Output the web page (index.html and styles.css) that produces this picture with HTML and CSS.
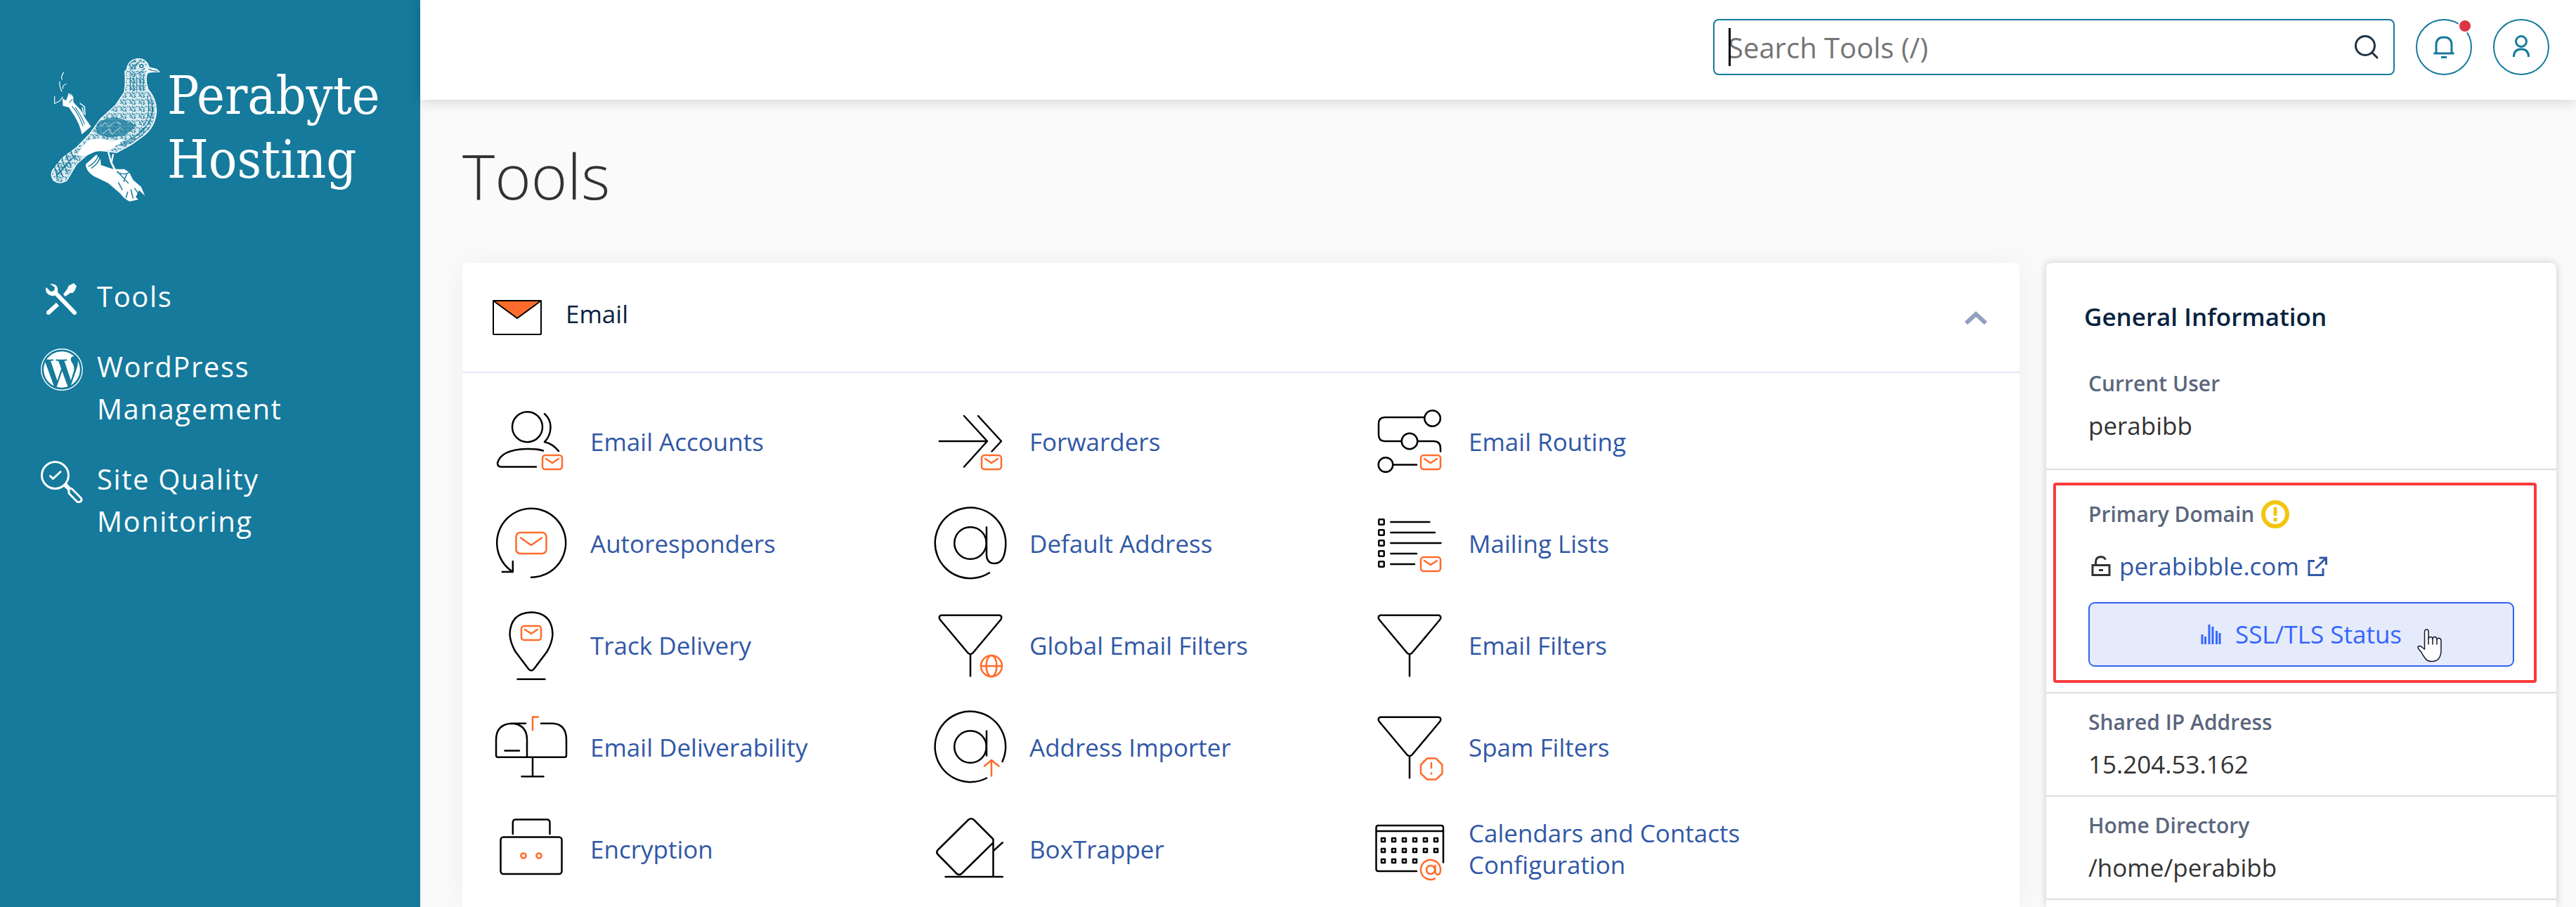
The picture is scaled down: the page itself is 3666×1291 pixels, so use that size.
FILE: index.html
```html
<!DOCTYPE html>
<html lang="en">
<head>
<meta charset="utf-8">
<title>Tools</title>
<meta name="viewport" content="width=device-width, initial-scale=1">
<link rel="stylesheet" href="styles.css">
</head>
<body>
<svg class="sprite" aria-hidden="true">
  <defs>
    <g id="mail"><rect x="76" y="80" width="28" height="20" rx="4"/><path d="M81 85l9 6 9-6"/></g>
    <g id="funnel"><path d="M19 17.7H101q3 .2 3.3 3 .1 2-1.3 3.6L63.2 71.8q-3.2 2.4-6.4 0L17 24.3q-1.400-1.600-1.300-3.600.3-2.800 3.300-3zM60 73.500V104.300"/></g>
    <pattern id="plumage" width="34" height="30" patternUnits="userSpaceOnUse">
      <path d="M2 4l7 5-2 7M14 2l4 8 8-3M28 12l-6 6 3 6M4 22l9-3 4 7M20 27l9-5M30 2l3 6M10 13l5 4" fill="none" stroke="#157a9c" stroke-width="3"/>
    </pattern>
  </defs>
</svg>
<div class="layout">
  <aside class="sidebar">
    <a class="logo" href="#">
      <svg class="logo-bird" viewBox="0 0 158 204" aria-hidden="true">
        <g transform="scale(.3838 .3333) translate(-183 -129)" stroke-linecap="round" stroke-linejoin="round">
          <path d="M237 188q-12 20-6 32M222 228q-2 22 8 42M246 238q-16 8-12 20M203 292v30l18-10 12-18M254 280q16 2 18 24" fill="none" stroke="#fff" stroke-width="3"/>
          <path d="M232 300l14 10 8-28 14 8 6 28 26 32 16 34 22 36-34 34q-6-40-28-80l-20-36-22-6z" fill="#fff"/>
          <path d="M298 322l16 14 2 34M306 340l4 26" fill="none" stroke="#fff" stroke-width="4"/>
          <path d="M268 334q24 30 40 84M280 340q20 30 34 70M258 318l10-14" fill="none" stroke="#157a9c" stroke-width="3"/>
          <path d="M318 582l40-42q20 20 16 44l46 18 42 0 18 14 14 32 30 30 14 38-22-24-12 30 10 10-32 8q-20-8-36-34l-44-44-54-30q-28-20-30-50z" fill="#fff"/>
          <path d="M330 590q30-20 36-48M340 598q26-20 30-44M436 612l40 50M470 625l-10 30M486 690l8 36M474 700l-6 24M500 684l12 20M454 690l-14-30M436 616q30 14 44 0" fill="none" stroke="#157a9c" stroke-width="4"/>
          <path d="M540 170l12-4 30 8 13 14-26 1-30 4z" fill="#fff"/>
          <path d="M471 178q4-42 40-47 32-2 41 34l-5 28q-6 10-4 40l6 28q32 42 31 96-4 62-44 100l-48 40-54 34-42-6-48-4-60 60-36 70q-26 18-48 0-18-30 4-56l28-40 52-44 50-60 40-64 56-58 32-56q6-40 2-88z" fill="#fff" fill-opacity=".85"/>
          <path d="M471 178q4-42 40-47 32-2 41 34l-5 28q-6 10-4 40l6 28q32 42 31 96-4 62-44 100l-48 40-54 34-42-6-48-4-60 60-36 70q-26 18-48 0-18-30 4-56l28-40 52-44 50-60 40-64 56-58 32-56q6-40 2-88z" fill="url(#plumage)" stroke="#fff" stroke-width="4"/>
          <path d="M368 400q50-30 90-10l50 26-44 42-60 10-42-16q-14-30 6-52z" fill="#157a9c" fill-opacity=".75"/>
          <path d="M372 420l20-16 12 18 20-20M382 450l24-20 10 24 30-30 10 12M430 400l20 10" fill="none" stroke="#fff" stroke-width="2"/>
          <path d="M484 206v60M496 204v66M508 208v60M520 206v62M532 204v60M478 160q10-20 26-22M484 180q14-26 34-34M560 300q14 60-10 110M546 290q16 60-8 120M568 340q-4 70-60 120M556 420q-40 60-96 80M540 420q-30 46-80 66M500 470q-30 24-60 30M492 196q16 6 40-16M500 172l10-24" fill="none" stroke="#157a9c" stroke-width="3"/>
          <path d="M200 580q10 40 14 56M214 564q4 40 20 70M230 552q4 30 20 60M246 536q4 26 18 50M262 520q4 20 16 40M210 630l40-50M230 600l50-56" fill="none" stroke="#157a9c" stroke-width="4"/>
          <path d="M322 484q50-24 90 0l52-12-50 46-60 10-40 20-30-6z" fill="#fff"/>
          <circle cx="525" cy="162" r="11" fill="#157a9c" stroke="#fff" stroke-width="4"/>
          <circle cx="525" cy="162" r="4" fill="#fff"/>
          <path d="M552 176q16 8 32 8" fill="none" stroke="#157a9c" stroke-width="4"/>
          <path d="M402 528l10 44 12 30 22 52M420 540l-6 34 12 28" fill="none" stroke="#fff" stroke-width="6"/>
        </g>
      </svg>
      <span class="logo-text">Perabyte<br>Hosting</span>
    </a>
    <nav class="nav">
      <a class="nav-item" href="#">
        <svg class="nav-icon" viewBox="0 0 60 60" aria-hidden="true">
          <path d="M22 22L48 49" stroke="#fff" stroke-width="6" stroke-linecap="round"/>
          <path d="M24 37L11 49" stroke="#fff" stroke-width="6" stroke-linecap="butt"/>
          <circle cx="11" cy="49" r="3" fill="#fff"/>
          <path d="M35 26l-3-3 6-8q1-5 5-6l4-2 4 4-1 3q-3 7-5 7h-3z" fill="#fff"/>
          <path d="M13 8q9-1 11 6 1 4-1 8l-4 3q-7 1-11-5-2-5 0-7l6 6 5-1 1-5z" fill="#fff"/>
        </svg>
        <span>Tools</span>
      </a>
      <a class="nav-item" href="#">
        <svg class="nav-icon" viewBox="0 0 24 24" aria-hidden="true">
          <circle cx="12" cy="12" r="11.700" fill="none" stroke="#fff" stroke-width=".55"/>
          <path transform="translate(.5 .5) scale(.958)" fill="#fff" d="M21.469 6.825c.84 1.537 1.318 3.3 1.318 5.175 0 3.979-2.156 7.456-5.363 9.325l3.295-9.527c.615-1.54.82-2.771.82-3.864 0-.405-.026-.78-.07-1.110m-7.981.105c.647-.03 1.232-.105 1.232-.105.582-.075.514-.93-.067-.899 0 0-1.755.135-2.880.135-1.064 0-2.850-.15-2.850-.15-.585-.03-.661.855-.075.885 0 0 .54.061 1.125.09l1.680 4.605-2.370 7.080L5.354 6.900c.649-.03 1.234-.1 1.234-.1.585-.075.516-.93-.065-.896 0 0-1.746.138-2.874.138-.2 0-.438-.008-.69-.015C4.911 3.150 8.235 1.215 12 1.215c2.809 0 5.365 1.072 7.286 2.833-.046-.003-.091-.009-.141-.009-1.060 0-1.812.923-1.812 1.914 0 .89.513 1.643 1.060 2.531.411.72.89 1.643.89 2.977 0 .915-.354 1.994-.821 3.479l-1.075 3.585-3.900-11.610.001.014zM12 22.784c-1.059 0-2.081-.153-3.048-.437l3.237-9.406 3.315 9.087c.024.053.05.101.078.149-1.120.393-2.325.609-3.582.609M1.211 12c0-1.564.336-3.050.935-4.390L7.290 21.709C3.694 19.960 1.212 16.271 1.211 12"/>
        </svg>
        <span>WordPress Management</span>
      </a>
      <a class="nav-item" href="#">
        <svg class="nav-icon" viewBox="0 0 60 60" fill="none" stroke="#fff" stroke-width="3" stroke-linecap="round" stroke-linejoin="round" aria-hidden="true">
          <circle cx="20.500" cy="20.500" r="19"/>
          <path d="M13.500 21.500l4 4 10.500-10M33.500 35l5.500 5.500M36 33l5 5.500"/>
          <path d="M40 42.500q-1-4 4-3l12.500 12.500q3 3.500.5 5.500-3 2.500-6 0L40 46z"/>
        </svg>
        <span>Site Quality Monitoring</span>
      </a>
    </nav>
  </aside>

  <div class="page">
    <header class="topbar">
      <form class="search" role="search">
        <input class="search-input" type="search" placeholder="Search Tools (/)" aria-label="Search Tools">
        <span class="caret"></span>
        <button class="search-button" type="button" aria-label="Search">
          <svg width="36" height="36" viewBox="0 0 36 36" fill="none" stroke="#1f3344" stroke-width="3" stroke-linecap="round" aria-hidden="true"><circle cx="16" cy="16" r="13.500"/><path d="M26 26l7 7"/></svg>
        </button>
      </form>
      <button class="round-button" type="button" aria-label="Notifications">
        <svg width="36" height="36" viewBox="0 0 36 36" fill="none" stroke="#157a9c" stroke-width="3" aria-hidden="true"><path d="M7 27V15q0-11 11-11t11 11v12M3.500 27h29M14 32.500h8"/></svg>
        <span class="dot"></span>
      </button>
      <button class="round-button" type="button" aria-label="Account">
        <svg width="36" height="36" viewBox="0 0 36 36" fill="none" stroke="#157a9c" stroke-width="3" aria-hidden="true"><circle cx="18" cy="10" r="7.500"/><path d="M7.500 32q0-11 10.500-11t10.500 11"/></svg>
      </button>
    </header>

    <main class="main">
      <h1 class="title">Tools</h1>
      <div class="columns">
        <section class="card">
          <div class="card-head">
            <svg width="70" height="50" viewBox="0 0 70 50" stroke="#000" stroke-width="2" stroke-linejoin="round" aria-hidden="true"><rect x="1" y="1" width="68" height="48" rx="1" fill="#fff"/><path d="M1 1h68L35 26z" fill="#ff6c2c"/></svg>
            <h2 class="card-title">Email</h2>
            <button class="collapse" type="button" aria-label="Collapse Email">
              <svg width="32" height="20" viewBox="0 0 32 20" fill="none" stroke="#929fbd" stroke-width="6" aria-hidden="true"><path d="M2 18L16 5l14 13"/></svg>
            </button>
          </div>
          <div class="tools">
            <a class="tool" href="#"><svg class="tool-icon" viewBox="0 0 120 120"><circle cx="54.500" cy="39.700" r="21.500"/><path d="M79 21q9 8 8.500 20T79 61q12 3 20 13M77 73.500q-10-3-24-2.500-36 1-41 20 0 5 4.500 5.500H67"/><use href="#mail" class="accent"/></svg><span>Email Accounts</span></a>
            <a class="tool" href="#"><svg class="tool-icon" viewBox="0 0 120 120"><path d="M15.800 60H83M51 24l33 36-33 36.500M71 24l33 36-13.500 14.500"/><use href="#mail" class="accent"/></svg><span>Forwarders</span></a>
            <a class="tool" href="#"><svg class="tool-icon" viewBox="0 0 120 120"><circle cx="92.600" cy="27.500" r="11.300"/><circle cx="60" cy="60" r="11.300"/><circle cx="26" cy="93.500" r="10.300"/><path d="M81 26H25q-9 0-9 9v16q0 9 9 9H48.500M71.500 60H94q10 0 10 10v4.500M37 93.500H70"/><use href="#mail" class="accent"/></svg><span>Email Routing</span></a>

            <a class="tool" href="#"><svg class="tool-icon" viewBox="0 0 120 120"><path d="M60 108.700A49 49 0 1 0 33.800 101M18.700 101H33.800V86"/><g class="accent"><rect x="38.500" y="45" width="43" height="30" rx="6"/><path d="M45 52.500L60 63l15-10.500"/></g></svg><span>Autoresponders</span></a>
            <a class="tool" href="#"><svg class="tool-icon" viewBox="0 0 120 120"><circle cx="60" cy="60" r="22.800"/><path d="M83 37.500V78q1 11 11 11 9 0 13-9Q110.300 71 110.300 60A50.300 50.300 0 1 0 87 102.300"/></svg><span>Default Address</span></a>
            <a class="tool" href="#"><svg class="tool-icon" viewBox="0 0 120 120"><path d="M33.300 30H88.400M33.300 45H96M33.300 60H104.500M33.300 75H70M33.300 90H67"/><g><rect x="16.200" y="26.200" width="7.500" height="7.500" rx="1"/><rect x="16.200" y="41.200" width="7.500" height="7.500" rx="1"/><rect x="16.200" y="56.200" width="7.500" height="7.500" rx="1"/><rect x="16.200" y="71.200" width="7.500" height="7.500" rx="1"/><rect x="16.200" y="86.200" width="7.500" height="7.500" rx="1"/></g><use href="#mail" class="accent"/></svg><span>Mailing Lists</span></a>

            <a class="tool" href="#"><svg class="tool-icon" viewBox="0 0 120 120"><path d="M60 13.500q30 1 30.500 32-1 12-8 24L64 94q-4 5-8 0L37.500 69.500q-7-12-8-24 .5-31 30.500-32zM40.500 108.700H79.500"/><use href="#mail" class="accent" x="-30" y="-47"/></svg><span>Track Delivery</span></a>
            <a class="tool" href="#"><svg class="tool-icon" viewBox="0 0 120 120"><use href="#funnel"/><g class="accent"><circle cx="90" cy="90" r="15"/><ellipse cx="90" cy="90" rx="7.500" ry="15"/><path d="M75 90h30"/></g></svg><span>Global Email Filters</span></a>
            <a class="tool" href="#"><svg class="tool-icon" viewBox="0 0 120 120"><use href="#funnel"/></svg><span>Email Filters</span></a>

            <a class="tool" href="#"><svg class="tool-icon" viewBox="0 0 120 120"><path d="M52 26.700H32Q10 28 10 50V72q0 2.700 2.500 2.700H107.500q2.500 0 2.500-2.700V50Q110 28 91 26.700H74M32 26.700Q54 28 54 50V74.700M22.500 65.500H43M62 74.700V102.300M46.500 102.300H77.500"/><path class="accent" d="M62 36.300V17.500H70"/></svg><span>Email Deliverability</span></a>
            <a class="tool" href="#"><svg class="tool-icon" viewBox="0 0 120 120"><circle cx="60" cy="60" r="22.800"/><path d="M83 37.500V72.500M105.500 81A50.300 50.300 0 1 0 83 104.500"/><path class="accent" d="M90 79v22.500M80 87.500l10-8.500 10.500 8.500"/></svg><span>Address Importer</span></a>
            <a class="tool" href="#"><svg class="tool-icon" viewBox="0 0 120 120"><use href="#funnel"/><g class="accent"><path d="M85 76.500h12.500l9 9v12.500l-9 8.500H85l-9-8.500V85.500z"/><path d="M91 83v7M91 97.500v1"/></g></svg><span>Spam Filters</span></a>

            <a class="tool" href="#"><svg class="tool-icon" viewBox="0 0 120 120"><path d="M33.800 39V23q0-4.500 4.500-4.500H82q4.500 0 4.500 4.500V39"/><rect x="16.500" y="43.500" width="87" height="52.500" rx="4"/><g class="accent"><circle cx="49" cy="70" r="3.600"/><circle cx="71" cy="70" r="3.600"/></g></svg><span>Encryption</span></a>
            <a class="tool" href="#"><svg class="tool-icon" viewBox="0 0 120 120"><path d="M92.500 51.300L47.500 95.500q-3.500 3-7 0L13.500 68q-2.500-3 0-6L57.500 18.500q3.500-2.500 7 0L92.500 46.500V100M24.500 100H105.800M93.500 62.400L105.800 51.300"/></svg><span>BoxTrapper</span></a>
            <a class="tool" href="#"><svg class="tool-icon" viewBox="0 0 120 120"><path d="M108 79.500V30q0-3-3-3H15.500q-3 0-3 3V89q0 3 3 3H70M12.500 35H108"/><path d="M20 45h5v5h-5zM35 45h5v5h-5zM50 45h5v5h-5zM65 45h5v5h-5zM80 45h5v5h-5zM95 45h5v5h-5zM20 60h5v5h-5zM35 60h5v5h-5zM50 60h5v5h-5zM65 60h5v5h-5zM80 60h5v5h-5zM95 60h5v5h-5zM20 75h5v5h-5zM35 75h5v5h-5zM50 75h5v5h-5zM65 75h5v5h-5z"/><g class="accent"><circle cx="90" cy="90" r="6"/><path d="M96.500 84v9q1 4 4 4 3.500-1 3.500-7A14 14 0 1 0 96 102.600"/></g></svg><span>Calendars and Contacts Configuration</span></a>
          </div>
        </section>

        <aside class="info">
          <h2 class="info-title">General Information</h2>
          <div class="info-row info-row-first">
            <div class="label">Current User</div>
            <div class="value">perabibb</div>
          </div>
          <div class="info-row info-row-domain">
            <div class="highlight">
              <div class="label label-icon">Primary Domain
                <svg width="40" height="40" viewBox="0 0 40 40" fill="none" stroke="#f2c511" aria-hidden="true"><circle cx="20" cy="20" r="17" stroke-width="6"/><path d="M20 10v12M20 25v5" stroke-width="5"/></svg>
              </div>
              <div class="domain">
                <svg width="28" height="30" viewBox="0 0 28 30" fill="none" stroke="#333" stroke-width="3" aria-hidden="true"><path d="M2 13.500h24v14H2zM6.500 13V9q0-7 7-7.500 5 0 7 4M11 20.500h6"/></svg>
                <a class="domain-link" href="#">perabibble.com
                  <svg width="28" height="28" viewBox="0 0 28 28" fill="none" stroke="#3158a6" stroke-width="3" aria-hidden="true"><path d="M10 6.500H2V26.500H22V17M16.500 2H26.500V12M26 2.500L11.500 17"/></svg>
                </a>
              </div>
              <button class="ssl-button" type="button">
                <svg width="29" height="28" viewBox="0 0 29 28" stroke="#36f" stroke-width="3" aria-hidden="true"><path d="M2 14v14M6.500 17v11M12 0v28M17 3v25M22.500 9v19M27 12v16"/></svg>
                SSL/TLS Status
                <svg class="pointer" width="36" height="48" viewBox="0 0 36 48" fill="#fff" stroke="#15182c" stroke-width="1.500" stroke-linejoin="round" stroke-linecap="round" aria-hidden="true"><path d="M10.500 29V4Q11 1 13.300 1 16 1 16 4V14q.5-2.500 3-2.500t3 3v-1q.5-2 3-2 2.500.2 3 3.500 1-2 3-1.700 3 .5 3 3.700V32q-.5 7-3.500 10.500Q27 46.500 20.500 46.500T11 41.500Q8 38 6 33.500L1.500 28Q0 25 3 24.500q2.500 0 4 2z"/><path d="M16 14v8M22 14v8M28 14.500v7.500" fill="none"/></svg>
              </button>
            </div>
          </div>
          <div class="info-row">
            <div class="label">Shared IP Address</div>
            <div class="value">15.204.53.162</div>
          </div>
          <div class="info-row">
            <div class="label">Home Directory</div>
            <div class="value">/home/perabibb</div>
          </div>
        </aside>
      </div>
    </main>
  </div>
</div>
</body>
</html>
```
FILE: styles.css
```css
* {
  box-sizing: border-box;
}

body {
  margin: 0;
  background: #fafafa;
  color: #333;
  font-family: "Open Sans", sans-serif;
  font-size: 35px;
  line-height: 50px;
}

a {
  text-decoration: none;
}

svg {
  display: block;
  flex: none;
}

button {
  font: inherit;
  padding: 0;
  background: none;
  border: 0;
  cursor: pointer;
}

h1,
h2 {
  margin: 0;
}

.sprite {
  position: absolute;
  width: 0;
  height: 0;
}

.layout {
  display: flex;
  min-height: 100vh;
}

/* Sidebar */
.sidebar {
  flex: none;
  width: 598px;
  padding-top: 83px;
  background: #157a9c;
}

.logo {
  display: flex;
  gap: 10px;
  margin-bottom: 105px;
  padding-left: 70px;
  color: #fff;
}

.logo-bird {
  width: 158px;
  height: 204px;
}

.logo-text {
  padding-top: 8px;
  font-family: "DejaVu Serif Condensed", "DejaVu Serif", serif;
  font-size: 75px;
  line-height: 91px;
}

.nav {
  display: flex;
  flex-direction: column;
  gap: 40px;
  padding: 0 100px 0 58px;
}

.nav-item {
  display: flex;
  gap: 20px;
  color: #fff;
  font-size: 40px;
  line-height: 60px;
  letter-spacing: 0.04em;
}

.nav-icon {
  width: 60px;
  height: 60px;
  margin: 4px 0 -4px;
}

/* Top bar */
.page {
  display: flex;
  flex: 1;
  flex-direction: column;
  min-width: 0;
}

.topbar {
  display: flex;
  justify-content: flex-end;
  gap: 30px;
  padding: 27px 38px 35px;
  background: #fff;
  box-shadow: 0 2px 20px rgba(0, 0, 0, 0.16);
}

.search {
  position: relative;
  display: flex;
  align-items: center;
  width: 970px;
  height: 80px;
  padding-right: 20px;
  border: 2px solid #157a9c;
  border-radius: 8px;
}

.search-input {
  flex: 1;
  min-width: 0;
  height: 100%;
  padding: 0 0 0 19px;
  border: 0;
  outline: 0;
  background: none;
  color: #333;
  font: inherit;
  font-size: 40px;
  appearance: none;
}

.search-input::placeholder {
  color: #757575;
  opacity: 1;
}

.caret {
  position: absolute;
  top: 11px;
  left: 20px;
  width: 3px;
  height: 54px;
  background: #000;
}

.round-button {
  position: relative;
  display: flex;
  align-items: center;
  justify-content: center;
  width: 80px;
  height: 80px;
  border: 2px solid #157a9c;
  border-radius: 50%;
}

.dot {
  position: absolute;
  top: -2px;
  right: -2px;
  width: 20px;
  height: 20px;
  border: 2px solid #fff;
  border-radius: 50%;
  background: #dc3545;
}

/* Content */
.main {
  display: flex;
  flex: 1;
  flex-direction: column;
  padding: 58px 28px 0 60px;
}

.title {
  margin-bottom: 74px;
  font-size: 88px;
  font-weight: 300;
  line-height: 100px;
}

.columns {
  display: flex;
  flex: 1;
  gap: 38px;
}

.card {
  flex: 1;
  min-width: 0;
  border-radius: 8px 8px 0 0;
  background: #fff;
  box-shadow: 0 0 40px rgba(0, 20, 20, 0.05);
}

.card-head {
  display: flex;
  align-items: center;
  gap: 34px;
  height: 157px;
  padding: 0 46px 0 43px;
  border-bottom: 2px solid #e3e8f4;
}

.card-title {
  flex: 1;
  padding-bottom: 10px;
  color: #08233f;
  font-size: 35px;
  font-weight: 400;
}

.tools {
  display: grid;
  grid-template-columns: repeat(auto-fill, 600px);
  gap: 25px;
  padding: 37px 38px 0;
}

.tool {
  display: flex;
  align-items: center;
  gap: 24px;
  color: #3158a6;
  line-height: 45px;
}

.tool-icon {
  width: 120px;
  height: 120px;
  fill: none;
  stroke: #000;
  stroke-width: 2.5px;
  stroke-linecap: round;
  stroke-linejoin: round;
}

.accent {
  stroke: #ff6c2c;
}

/* General information */
.info {
  flex: none;
  width: 726px;
  border-radius: 8px 8px 0 0;
  background: #fff;
  box-shadow: 0 0 12px rgba(0, 0, 0, 0.2);
}

.info-title {
  padding: 52px 54px 30px;
  color: #08233f;
  font-size: 35px;
  font-weight: 600;
}

.info-row {
  padding: 19px 60px;
  border-bottom: 2px solid #ddd;
}

.info-row-first {
  padding: 18px 60px 36px;
}

.info-row-domain {
  padding: 18px 28px 13px 10px;
}

.label {
  margin-bottom: 14px;
  color: #5b667d;
  font-size: 30px;
  font-weight: 600;
  line-height: 43px;
}

.label-icon {
  display: flex;
  align-items: center;
  gap: 10px;
  margin: 0;
}

.highlight {
  display: flex;
  flex-direction: column;
  padding: 19px 28px 19px 46px;
  border: 4px solid #f93b3b;
  border-radius: 4px;
}

.domain,
.domain-link {
  display: flex;
  align-items: center;
  gap: 12px;
}

.domain {
  margin: 28px 0 26px;
  padding-left: 4px;
}

.domain-link {
  color: #3158a6;
}

.ssl-button {
  position: relative;
  display: flex;
  align-items: center;
  justify-content: center;
  gap: 20px;
  height: 92px;
  border: 2px solid #2f63f2;
  border-radius: 9px;
  background: #e6ebfb;
  color: #36f;
  font-weight: 500;
}

.pointer {
  position: absolute;
  top: 36px;
  right: 100px;
}
```
